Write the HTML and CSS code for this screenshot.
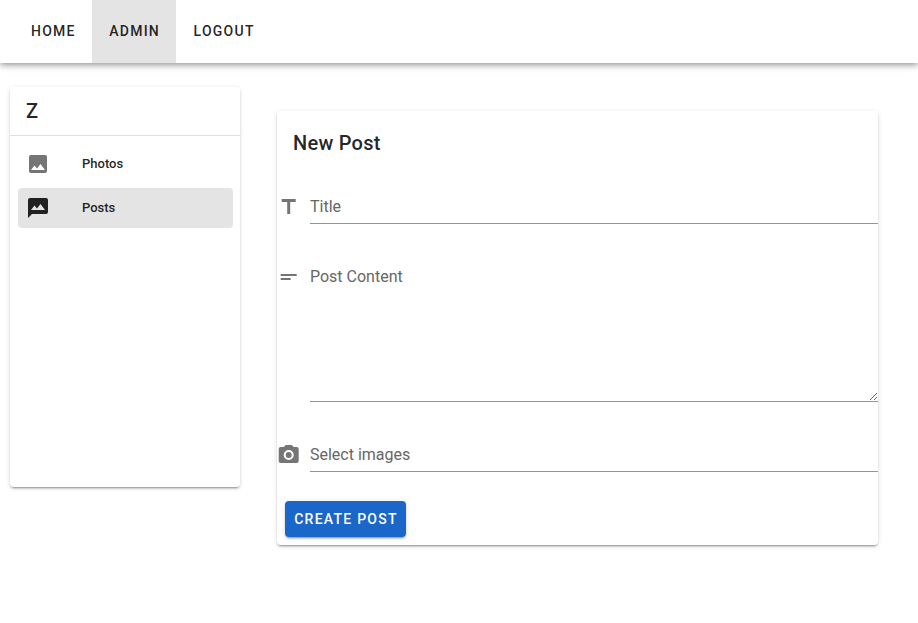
FILE: index.html
```html
<!DOCTYPE html>
<html lang="en">
<head>
<meta charset="utf-8">
<title>New Post</title>
<link rel="stylesheet" href="styles.css">
</head>
<body>
<header class="toolbar">
  <a class="tab">Home</a>
  <a class="tab active">Admin</a>
  <a class="tab">Logout</a>
</header>
<main class="layout">
  <aside class="card drawer">
    <div class="drawer-title">Z</div>
    <nav class="list">
      <a class="item"><svg class="icon" viewBox="0 0 24 24"><path fill-rule="evenodd" d="M8.5,13.5L11,16.5L14.5,12L19,18H5M21,19V5C21,3.89 20.1,3 19,3H5A2,2 0 0,0 3,5V19A2,2 0 0,0 5,21H19A2,2 0 0,0 21,19Z"/></svg><span class="label">Photos</span></a>
      <a class="item selected"><svg class="icon" viewBox="0 0 24 24"><path fill-rule="evenodd" d="M5,14L8.5,9.5L11,12.5L14.5,8L19,14M20,2H4A2,2 0 0,0 2,4V22L6,18H20A2,2 0 0,0 22,16V4A2,2 0 0,0 20,2Z"/></svg><span class="label">Posts</span></a>
    </nav>
  </aside>
  <section class="card form">
    <h1 class="form-title">New Post</h1>
    <div class="row">
      <svg class="icon" viewBox="0.3 0 24 24"><path d="M5,4V7H10.5V19H13.5V7H19V4H5Z"/></svg>
      <div class="field">Title</div>
    </div>
    <div class="row">
      <svg class="icon" viewBox="0.3 0 24 24"><path d="M4,9H20V11H4V9M4,13H14V15H4V13Z"/></svg>
      <textarea class="field area" placeholder="Post Content"></textarea>
    </div>
    <div class="row">
      <svg class="icon" viewBox="0.3 0 24 24"><path d="M4,4H7L9,2H15L17,4H20A2,2 0 0,1 22,6V18A2,2 0 0,1 20,20H4A2,2 0 0,1 2,18V6A2,2 0 0,1 4,4M12,7A5,5 0 0,0 7,12A5,5 0 0,0 12,17A5,5 0 0,0 17,12A5,5 0 0,0 12,7M12,9A3,3 0 0,1 15,12A3,3 0 0,1 12,15A3,3 0 0,1 9,12A3,3 0 0,1 12,9Z"/></svg>
      <div class="field">Select images</div>
    </div>
    <button class="submit">Create Post</button>
  </section>
</main>
</body>
</html>
```

FILE: styles.css
```css
* { box-sizing: border-box; }
body {
  margin: 0;
  background: #fff;
  color: rgba(0, 0, 0, .87);
  font-family: Roboto, sans-serif;
}
.toolbar {
  display: flex;
  height: 63px;
  padding-left: 13.5px;
  box-shadow: 0 2px 4px -1px rgba(0,0,0,.2), 0 4px 5px rgba(0,0,0,.14), 0 1px 10px rgba(0,0,0,.12);
}
.tab {
  display: flex;
  align-items: center;
  padding: 0 16px 1px 17.5px;
  font-size: 14px;
  font-weight: 500;
  letter-spacing: 1.25px;
  text-transform: uppercase;
}
.tab.active { background: #e4e4e4; }
.layout {
  display: flex;
  align-items: flex-start;
  min-height: 560px;
  padding: 24px 40px 0 10px;
  gap: 36.7px;
}
.card {
  background: #fff;
  border-radius: 4px;
  box-shadow: 0 3px 1px -2px rgba(0,0,0,.2), 0 2px 2px rgba(0,0,0,.14), 0 1px 5px rgba(0,0,0,.12);
}
.drawer { width: 230.3px; height: 400px; }
.drawer-title {
  height: 49px;
  margin-right: -.7px;
  padding-left: 16px;
  border-bottom: 1px solid #e0e0e0;
  font-size: 20px;
  font-weight: 500;
  line-height: 48px;
}
.list { padding: 8px 7.3px 0 8px; }
.item {
  display: flex;
  align-items: center;
  height: 40px;
  margin-bottom: 4px;
  padding-left: 8px;
  gap: 32px;
  border-radius: 4px;
  font-size: 13px;
  font-weight: 500;
}
.label { padding-bottom: 2px; }
.selected { background: #e4e4e4; }
.icon { flex: none; width: 24px; height: 24px; fill: #757575; }
.selected .icon { fill: #212121; }
.form { flex: 1; height: 434.4px; margin-top: 24px; }
.form-title {
  height: 64px;
  margin: 0 0 16px;
  padding-left: 16px;
  font-size: 20px;
  font-weight: 500;
  letter-spacing: .25px;
  line-height: 64px;
}
.row { display: flex; gap: 9px; margin-bottom: 37px; }
.row .icon { margin-top: 4px; }
.field {
  flex: 1;
  height: 33px;
  padding: 0;
  border: 0;
  border-bottom: 1px solid #949494;
  background: none;
  color: #666;
  font: 16px/31px Roboto, sans-serif;
}
.area { height: 141px; resize: vertical; }
.area::placeholder { color: #666; opacity: 1; }
.submit {
  display: block;
  width: 121px;
  height: 36px;
  margin: -8px 0 0 8px;
  padding: 0 0 0 1px;
  border: 0;
  border-radius: 4px;
  background: #1b66c9;
  color: #fff;
  box-shadow: 0 3px 1px -2px rgba(0,0,0,.2), 0 2px 2px rgba(0,0,0,.14), 0 1px 5px rgba(0,0,0,.12);
  font: 500 14px Roboto, sans-serif;
  letter-spacing: 1.25px;
  text-transform: uppercase;
}
```
